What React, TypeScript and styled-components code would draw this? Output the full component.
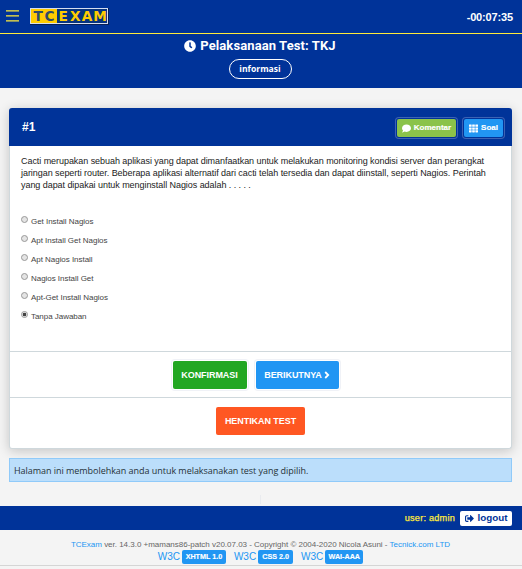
import React from 'react';
import styled, { createGlobalStyle } from 'styled-components';
import { FaClock, FaComment, FaTh, FaSignOutAlt } from 'react-icons/fa';

const navy = '#003399';
const blue = '#2196f3';
const yellow = '#ffeb3b';

const GlobalStyle = createGlobalStyle`
  * { box-sizing: border-box; }
  body {
    margin: 0;
    background: #f4f4f4;
    color: #333;
    font: 9px/12px "Liberation Sans", Arial, sans-serif;
    overflow: hidden;
  }
`;

const Page = styled.div`
  display: flex;
  flex-direction: column;
  width: 522px;
  height: 569px;
`;

const TopBar = styled.header`
  display: flex;
  align-items: center;
  height: 34px;
  padding: 0 9px 2px 6px;
  background: ${navy};
  border-bottom: 1px solid ${yellow};
`;

const MenuIcon = styled.svg`
  width: 13px;
  height: 12px;
  margin-right: 11px;
`;

const Logo = styled.svg`
  width: 79px;
  height: 17px;
  margin-top: 1px;
`;

const LogoText = styled.text`
  font: bold 13.7px "DejaVu Sans", sans-serif;
`;

const Timer = styled.time`
  margin-left: auto;
  color: #fff;
  font: bold 11px/14px "Liberation Sans", Arial, sans-serif;
  letter-spacing: -0.15px;
  padding-top: 3px;
`;

const TitleBand = styled.section`
  display: flex;
  flex-direction: column;
  align-items: center;
  height: 54px;
  padding: 3px 2px 0 0;
  background: ${navy};
  color: #fff;
`;

const Title = styled.h1`
  display: flex;
  align-items: center;
  gap: 4px;
  margin: 0;
  font: bold 13px/18px Roboto, sans-serif;
  letter-spacing: 0.1px;
`;

const InfoButton = styled.button`
  width: 63px;
  height: 20px;
  margin-top: 4px;
  padding: 0 0 1px;
  border: 1px solid #fff;
  border-radius: 10px;
  background: transparent;
  color: #fff;
  font: bold 8.6px/16px "Open Sans", sans-serif;
`;

const Card = styled.main`
  height: 341px;
  margin: 20px 10px 0 9px;
  border: 1px solid #cfd8dc;
  border-top: 0;
  border-radius: 3px;
  background: #fff;
  box-shadow: 0 2px 12px rgba(0, 0, 0, 0.2);
`;

const CardHeader = styled.div`
  display: flex;
  align-items: center;
  gap: 8px;
  height: 38px;
  margin: 0 -1px;
  padding: 2px 9px 0 13px;
  border-radius: 3px 3px 0 0;
  background: ${navy};
`;

const QuestionNumber = styled.h2`
  margin: 0 auto 2px 0;
  color: #fff;
  font: bold 12px/16px "Liberation Sans", Arial, sans-serif;
`;

const HeaderButton = styled.button<{ $color: string; $width: number }>`
  display: flex;
  align-items: center;
  justify-content: center;
  gap: 3px;
  width: ${p => p.$width}px;
  height: 18px;
  padding: 0;
  border: 0;
  border-radius: 2px;
  background: ${p => p.$color};
  box-shadow: 0 0 0 1px ${navy}, 0 0 0 2px #3d62b2;
  color: #fff;
  font: bold 8px/12px "Liberation Sans", Arial, sans-serif;
  -webkit-text-stroke: 0.2px #fff;
`;

const Question = styled.p`
  height: 60px;
  margin: 0;
  padding: 9px 0 0 11px;
  white-space: pre;
  letter-spacing: -0.056px;
  color: #222;
`;

const Options = styled.div`
  display: flex;
  flex-direction: column;
  height: 145px;
  padding: 5px 0 0 11px;
`;

const Option = styled.label`
  display: flex;
  align-items: flex-start;
  height: 19px;
  color: #444;
  font: 8px/10px "Liberation Sans", Arial, sans-serif;
  letter-spacing: -0.04px;
`;

const OptionText = styled.span`
  padding-top: 6px;
  margin-left: 3px;
`;

const Radio = styled.input.attrs({ type: 'radio' })`
  appearance: none;
  width: 7px;
  height: 7px;
  margin: 5px 0 0;
  border: 1px solid #999;
  border-radius: 50%;
  background: #e4e4e4;
  &:checked {
    background: radial-gradient(circle, #444 0 1.6px, #eee 2.1px);
  }
`;

const Actions = styled.div<{ $height: number; $trailing?: number }>`
  display: flex;
  justify-content: center;
  gap: 9px;
  height: ${p => p.$height}px;
  padding: 9px ${p => p.$trailing ?? 0}px 0 0;
  border-top: 1px solid #cfd8dc;
`;

const ActionButton = styled.button<{ $color: string; $width: number; $ring?: boolean }>`
  display: flex;
  align-items: center;
  justify-content: center;
  gap: 2px;
  width: ${p => p.$width}px;
  height: 28px;
  padding: 0;
  border: 0;
  border-radius: 2px;
  background: ${p => p.$color};
  box-shadow: ${p => (p.$ring ? '0 0 0 1px #fff, 0 0 0 2px #f0f2f7' : 'none')};
  color: #fff;
  font: bold 9px/12px "Liberation Sans", Arial, sans-serif;
  letter-spacing: -0.06px;
`;

const Chevron = styled.svg`
  width: 6px;
  height: 8px;
`;

const Notice = styled.div`
  height: 24px;
  margin: 9px 10px 0 9px;
  padding: 5px 4px;
  border: 1px solid #90caf9;
  background: #bbdefb;
  color: #263238;
  font: 9px/14px "Open Sans", sans-serif;
  letter-spacing: -0.04px;
`;

const Tick = styled.div`
  width: 1px;
  height: 9px;
  margin: 13px 261px 2px 260px;
  background: #e9ebef;
`;

const UserBar = styled.div`
  display: flex;
  align-items: center;
  justify-content: flex-end;
  gap: 5px;
  height: 24px;
  padding-right: 10px;
  background: ${navy};
  color: ${yellow};
  font: 9.1px/14px "Liberation Sans", Arial, sans-serif;
  -webkit-text-stroke: 0.25px ${yellow};
  letter-spacing: 0.25px;
`;

const LogoutButton = styled.button`
  display: flex;
  align-items: center;
  justify-content: center;
  gap: 4px;
  width: 52px;
  height: 15px;
  padding: 0;
  border: 0;
  border-radius: 2px;
  background: #fff;
  color: ${navy};
  font: bold 9.8px/14px "Liberation Sans", Arial, sans-serif;
  -webkit-text-stroke: 0;
  letter-spacing: 0;
`;

const Footer = styled.footer`
  height: 36px;
  padding: 9px 1px 0 0;
  border-bottom: 1px solid #d5d5d5;
  color: #666;
  text-align: center;
  font: 8px/11px "Liberation Sans", Arial, sans-serif;
  letter-spacing: -0.015px;
`;

const Link = styled.a`
  color: ${blue};
`;

const Standards = styled.div`
  display: flex;
  justify-content: center;
  gap: 8px;
`;

const Standard = styled.span`
  display: flex;
  align-items: center;
  gap: 2px;
  color: ${blue};
  font: 10px/14px "Liberation Sans", Arial, sans-serif;
`;

const Badge = styled.span<{ $width: number }>`
  width: ${p => p.$width}px;
  height: 14px;
  border-radius: 2px;
  background: ${blue};
  color: #fff;
  font: bold 7.2px/14px "Liberation Sans", Arial, sans-serif;
  -webkit-text-stroke: 0.15px #fff;
`;

const questionText = `Cacti merupakan sebuah aplikasi yang dapat dimanfaatkan untuk melakukan monitoring kondisi server dan perangkat
jaringan seperti router. Beberapa aplikasi alternatif dari cacti telah tersedia dan dapat diinstall, seperti Nagios. Perintah
yang dapat dipakai untuk menginstall Nagios adalah . . . . .`;

const options = [
  'Get Install Nagios',
  'Apt Install Get Nagios',
  'Apt Nagios Install',
  'Nagios Install Get',
  'Apt-Get Install Nagios',
  'Tanpa Jawaban',
];

const standards = [
  { name: 'XHTML 1.0', width: 44 },
  { name: 'CSS 2.0', width: 35 },
  { name: 'WAI-AAA', width: 38 },
];

export default function App() {
  return (
    <Page>
      <GlobalStyle />
      <TopBar>
        <MenuIcon viewBox="0 0 13 12">
          <path d="M0 .9h13M0 5.9h13M0 10.9h13" stroke={yellow} strokeWidth="1.3" />
        </MenuIcon>
        <Logo viewBox="0 0 79 17">
          <rect width="79" height="17" fill="#071f57" />
          <rect x=".5" y=".5" width="77" height="15" fill={navy} stroke="#d5def0" />
          <rect x="1" y="1" width="26" height="14" fill="#ffcc00" />
          <rect x="27" y="1" width="50" height="14" fill="#07347f" />
          <LogoText y="13" x="3.4 14.4" fill="#304b68">TC</LogoText>
          <LogoText y="13" x="28.6 40 51.8 63.2" fill="#ffcc00">EXAM</LogoText>
        </Logo>
        <Timer>-00:07:35</Timer>
      </TopBar>
      <TitleBand>
        <Title><FaClock size={12} />Pelaksanaan Test: TKJ</Title>
        <InfoButton>informasi</InfoButton>
      </TitleBand>
      <Card>
        <CardHeader>
          <QuestionNumber>#1</QuestionNumber>
          <HeaderButton $color="#8bc34a" $width={59}><FaComment size={9} />Komentar</HeaderButton>
          <HeaderButton $color={blue} $width={39}><FaTh size={9} />Soal</HeaderButton>
        </CardHeader>
        <Question>{questionText}</Question>
        <Options>
          {options.map((text, i) => (
            <Option key={text}>
              <Radio name="answer" defaultChecked={i === 5} />
              <OptionText>{text}</OptionText>
            </Option>
          ))}
        </Options>
        <Actions $height={46} $trailing={10}>
          <ActionButton $color="#22a722" $width={74} $ring>KONFIRMASI</ActionButton>
          <ActionButton $color={blue} $width={83} $ring>
            BERIKUTNYA
            <Chevron viewBox="0 0 6 8"><path d="M1.2 1 4.2 4 1.2 7" fill="none" stroke="#fff" strokeWidth="1.8" /></Chevron>
          </ActionButton>
        </Actions>
        <Actions $height={50}>
          <ActionButton $color="#ff5722" $width={89}>HENTIKAN TEST</ActionButton>
        </Actions>
      </Card>
      <Notice>Halaman ini membolehkan anda untuk melaksanakan test yang dipilih.</Notice>
      <Tick />
      <UserBar>
        user: admin
        <LogoutButton><FaSignOutAlt size={9} />logout</LogoutButton>
      </UserBar>
      <Footer>
        <Link>TCExam</Link> ver. 14.3.0 +mamans86-patch v20.07.03 - Copyright © 2004-2020 Nicola Asuni - <Link>Tecnick.com LTD</Link>
        <Standards>
          {standards.map(s => (
            <Standard key={s.name}>W3C<Badge $width={s.width}>{s.name}</Badge></Standard>
          ))}
        </Standards>
      </Footer>
    </Page>
  );
}
